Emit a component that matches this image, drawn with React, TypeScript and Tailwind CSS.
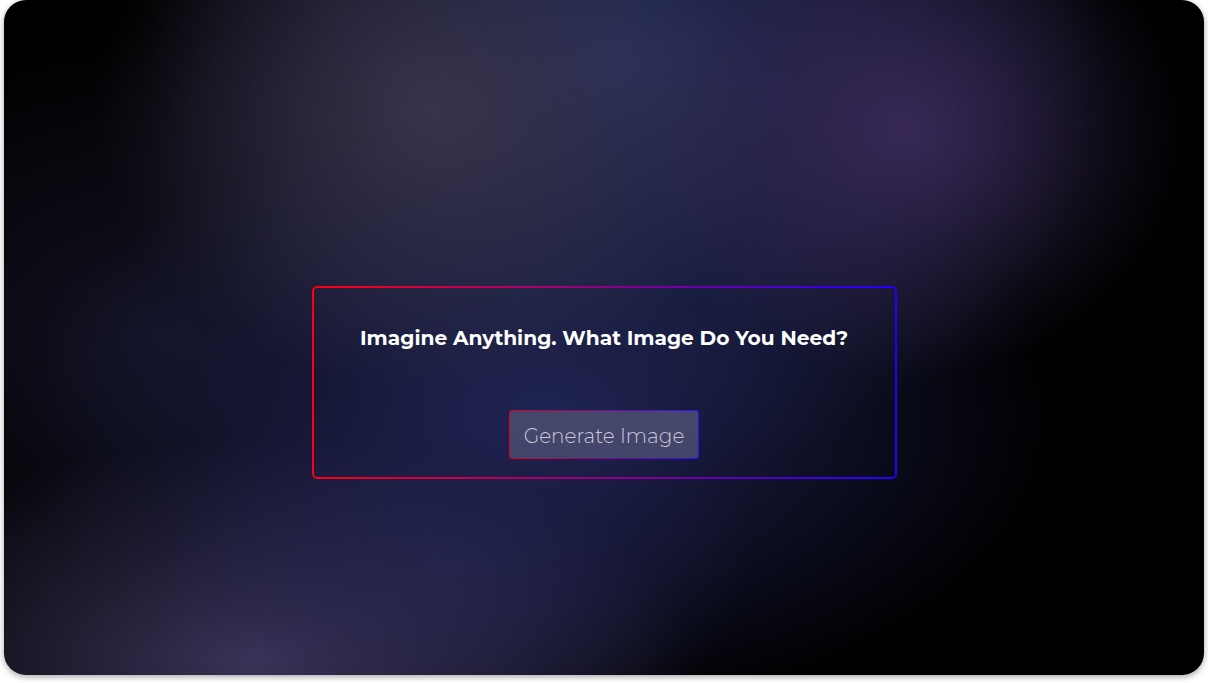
export default function App() {
  return (
    <div className="min-h-screen bg-white p-[4px] pt-0 pb-[8px] font-['Montserrat','Noto_Sans',sans-serif]">
      <div className="relative h-[675px] overflow-hidden rounded-[22px] bg-black shadow-[0_2px_6px_rgba(0,0,0,0.35)] bg-[radial-gradient(ellipse_340px_280px_at_430px_110px,rgba(60,54,76,0.9),transparent),radial-gradient(ellipse_280px_250px_at_900px_130px,rgba(58,42,90,0.95),transparent),radial-gradient(ellipse_480px_420px_at_620px_60px,rgba(38,48,100,0.95),transparent),radial-gradient(ellipse_520px_300px_at_540px_420px,rgba(32,35,84,0.95),transparent),radial-gradient(ellipse_440px_220px_at_250px_660px,rgba(60,54,92,0.95),transparent),radial-gradient(ellipse_300px_200px_at_450px_560px,rgba(34,34,72,0.8),transparent),radial-gradient(ellipse_420px_300px_at_150px_330px,rgba(22,22,42,0.8),transparent)]">
        <div className="flex h-full items-center justify-center">
          <div className="relative mt-[90px] flex w-[585px] flex-col items-center px-6 pt-[37px] pb-[20px]">
            <div className="pointer-events-none absolute inset-0 rounded-[5px] bg-[linear-gradient(to_right,#ff0010,#2000ff)] p-[2px] [mask:linear-gradient(#000_0_0)_content-box_exclude,linear-gradient(#000_0_0)]" />
            <h1 className="text-[20.2px] font-bold text-white">Imagine Anything. What Image Do You Need?</h1>
            <button className="mt-[56px] h-[49px] w-[190px] rounded-[4px] border border-transparent pt-[4px] text-[20px] font-light text-[#c8c8d8] [background:linear-gradient(#45476b,#42446a)_padding-box,linear-gradient(to_right,#e00020,#2a10ff)_border-box]">
              Generate Image
            </button>
          </div>
        </div>
      </div>
    </div>
  );
}
